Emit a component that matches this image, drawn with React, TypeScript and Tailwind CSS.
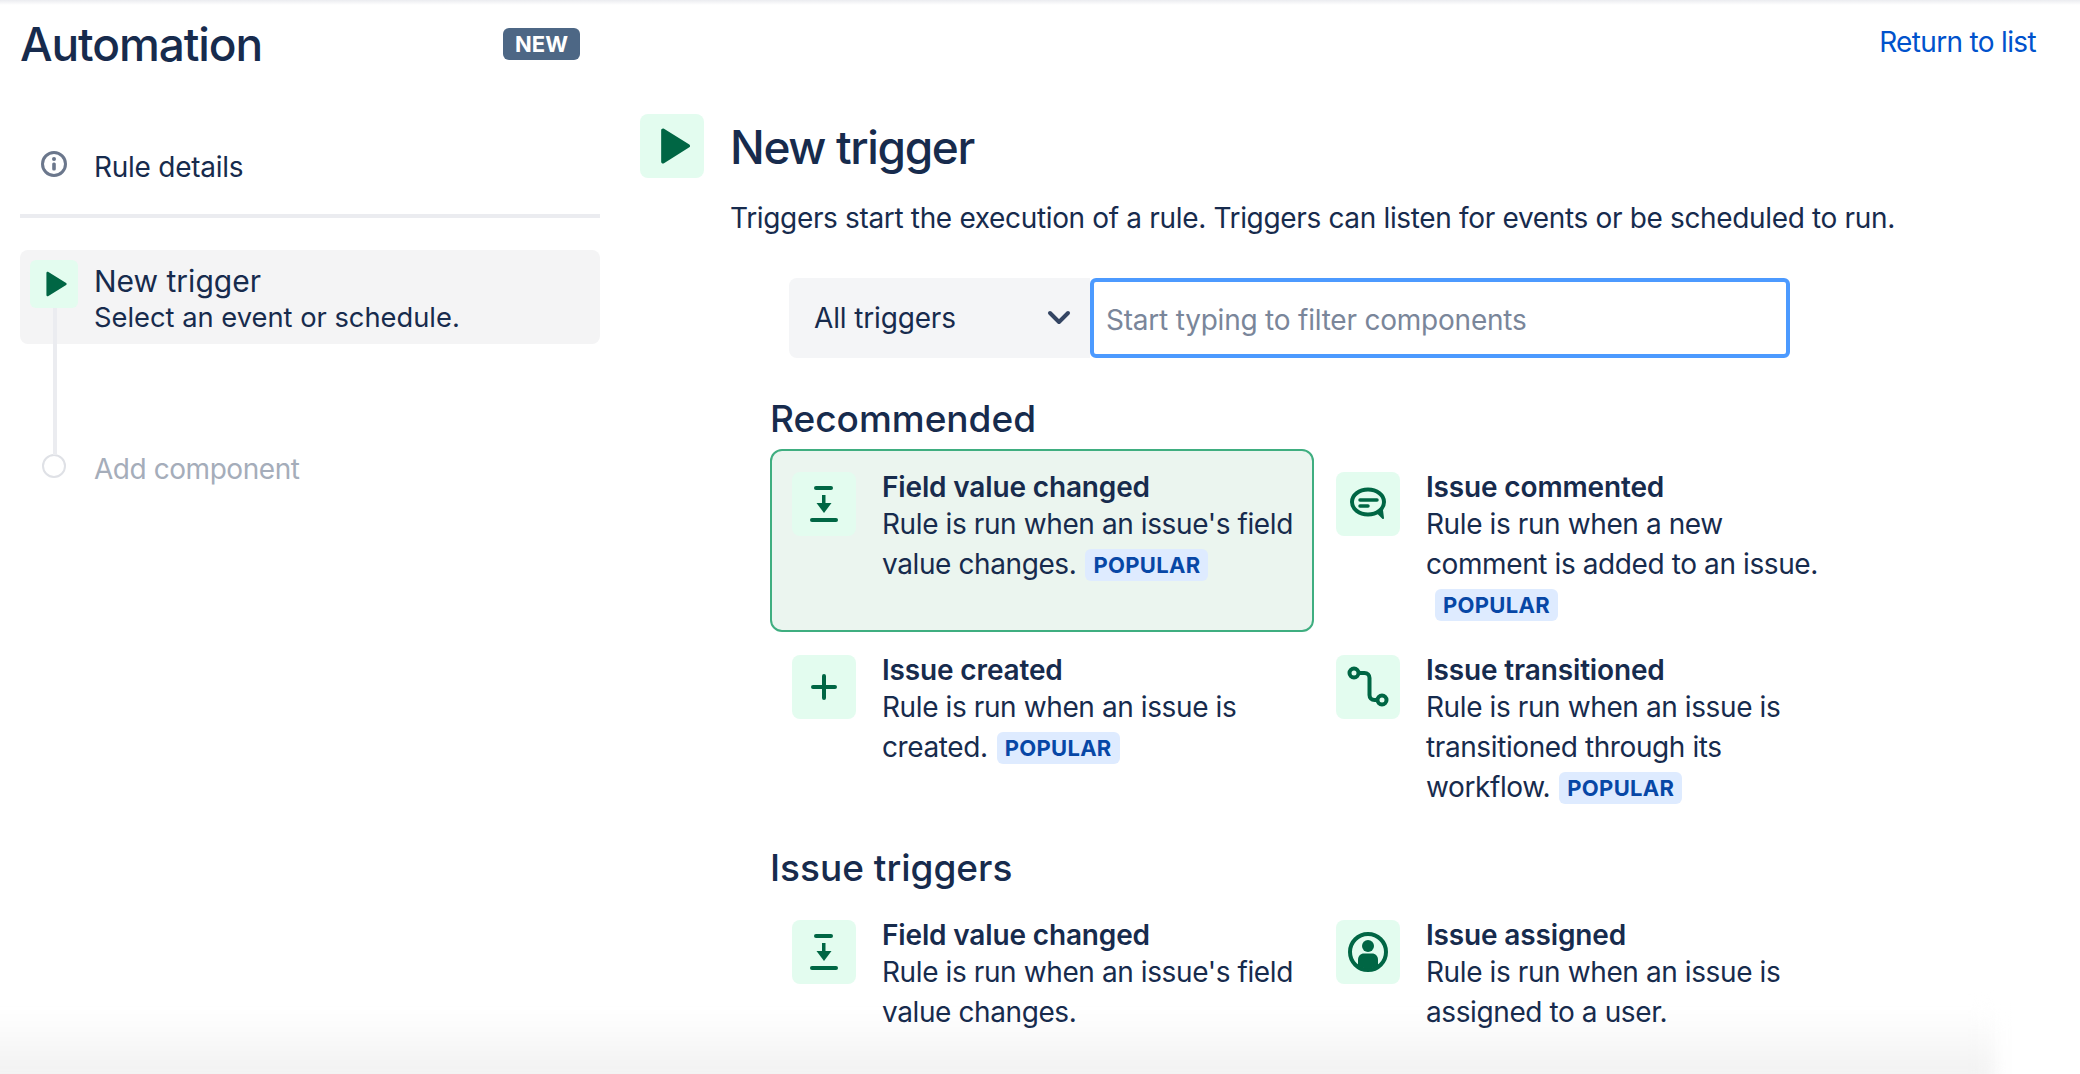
import React from "react";

type Trigger = {
  title: string;
  lines: string;
  icon: React.ReactNode;
  popular?: boolean;
  selected?: boolean;
};

const GREEN = "#006644";

function PlayIcon({ size }: { size: number }) {
  return (
    <svg width={size} height={size} viewBox="0 0 24 24" fill={GREEN}>
      <path d="M5.5 2.6c0-.9 1-1.4 1.700-.9l15.200 9.400c.6.4.6 1.300 0 1.700L7.200 22.300c-.7.5-1.700 0-1.700-.9V2.600z" />
    </svg>
  );
}

function FieldIcon() {
  return (
    <svg width="32" height="40" viewBox="0 0 32 40" fill={GREEN}>
      <rect x="6" y="2" width="19" height="4" rx="2" />
      <rect x="14" y="11" width="3.500" height="14" />
      <path d="M8.500 19h15L16 29z" />
      <rect x="2" y="34" width="28" height="4" rx="2" />
    </svg>
  );
}

function CommentIcon() {
  return (
    <svg width="38" height="34" viewBox="0 0 38 34" fill="none" stroke={GREEN}>
      <ellipse cx="19" cy="15" rx="16" ry="12.500" strokeWidth="4" />
      <path d="M28 25l6 6-1-8z" fill={GREEN} strokeWidth="2" strokeLinejoin="round" />
      <path d="M11 13h17" strokeWidth="3.500" strokeLinecap="round" />
      <path d="M11 19h8" strokeWidth="3.500" strokeLinecap="round" />
    </svg>
  );
}

function PlusIcon() {
  return (
    <svg width="26" height="26" viewBox="0 0 26 26" fill="none" stroke={GREEN} strokeWidth="4" strokeLinecap="round">
      <path d="M13 2v22M2 13h22" />
    </svg>
  );
}

function TransitionIcon() {
  return (
    <svg width="42" height="42" viewBox="0 0 42 42" fill="none" stroke={GREEN} strokeWidth="4">
      <circle cx="7" cy="7" r="4.500" />
      <circle cx="35" cy="34" r="4.500" />
      <path d="M11.500 7h6c3 0 5 2 5 5v17c0 3 2 5 5 5h3" />
    </svg>
  );
}

function PersonIcon() {
  return (
    <svg width="40" height="40" viewBox="0 0 40 40" fill={GREEN}>
      <circle cx="20" cy="20" r="18" fill="none" stroke={GREEN} strokeWidth="4" />
      <circle cx="20" cy="14" r="6" />
      <path d="M10 28c0-4 2.500-6.500 6-6.500h8c3.500 0 6 2.500 6 6.500v5.500c-2.800 2-6.200 3-10 3s-7.200-1-10-3z" />
    </svg>
  );
}

function InfoIcon() {
  return (
    <svg width="26" height="26" viewBox="0 0 26 26" fill="none">
      <circle cx="13" cy="13" r="11.500" stroke="#6B778C" strokeWidth="3" />
      <circle cx="13" cy="8" r="2" fill="#6B778C" />
      <rect x="11.200" y="11.500" width="3.600" height="8" rx="1.500" fill="#6B778C" />
    </svg>
  );
}

const recommended: Trigger[] = [
  {
    title: "Field value changed",
    lines: "Rule is run when an issue's field value changes.",
    icon: <FieldIcon />,
    popular: true,
    selected: true,
  },
  {
    title: "Issue commented",
    lines: "Rule is run when a new comment is added to an issue.",
    icon: <CommentIcon />,
    popular: true,
  },
  {
    title: "Issue created",
    lines: "Rule is run when an issue is created.",
    icon: <PlusIcon />,
    popular: true,
  },
  {
    title: "Issue transitioned",
    lines: "Rule is run when an issue is transitioned through its workflow.",
    icon: <TransitionIcon />,
    popular: true,
  },
];

const issueTriggers: Trigger[] = [
  {
    title: "Field value changed",
    lines: "Rule is run when an issue's field value changes.",
    icon: <FieldIcon />,
  },
  {
    title: "Issue assigned",
    lines: "Rule is run when an issue is assigned to a user.",
    icon: <PersonIcon />,
  },
];

function TriggerCard({ trigger }: { trigger: Trigger }) {
  return (
    <div
      className={`flex gap-[26px] rounded-xl border-2 pb-[6px] pl-5 pr-[12px] pt-[21px] ${
        trigger.selected ? "border-[#3fae80] bg-[#ebf5ef]" : "border-transparent"
      }`}
    >
      <div className="flex h-16 w-16 shrink-0 items-center justify-center rounded-lg bg-[#e3fcef]">
        {trigger.icon}
      </div>
      <div className="min-w-0 text-[28px] leading-[40px] tracking-[-0.4px] text-[#172b4d]">
        <div className="h-[32px] font-semibold leading-[30px] tracking-[-0.15px]">{trigger.title}</div>
        <div>
          {trigger.lines}
          {trigger.popular ? (
            <span className="ml-[9px] inline-block rounded-md bg-[#deebff] px-2 align-[1px] text-[22px] font-bold leading-[32px] tracking-[0.3px] text-[#0747a6]">
              POPULAR
            </span>
          ) : null}
        </div>
      </div>
    </div>
  );
}

export default function App() {
  return (
    <div className="relative h-screen overflow-hidden bg-white font-['Inter',sans-serif] text-[#172b4d]">
      <div className="absolute inset-x-0 top-0 h-[5px] bg-gradient-to-b from-[#ebecf0] to-white" />
      <div className="absolute bottom-[-12px] left-[-30px] h-[76px] w-[2025px] bg-gradient-to-b from-white to-[#efefef] blur-[10px]" />

      <div className="relative flex">
        <aside className="ml-5 w-[580px] shrink-0">
          <div className="flex h-[88px] items-center justify-between pr-5">
            <h1 className="text-[46px] font-medium leading-[52px] tracking-[-1.1px]">Automation</h1>
            <span className="rounded-md bg-[#4d6785] px-3 text-[22px] font-bold leading-[32px] text-white">
              NEW
            </span>
          </div>

          <div className="flex h-[130px] items-center gap-[27px] border-b-4 border-[#ebecf0] pb-[4px] pl-[21px] pt-[30px]">
            <InfoIcon />
            <span className="pt-[5px] text-[28px] tracking-[-0.25px]">Rule details</span>
          </div>

          <div className="relative mt-8 h-[94px] rounded-lg bg-[#f4f4f5] pl-[74px] pt-[10px]">
            <div className="absolute left-[10px] top-[10px] flex h-12 w-12 items-center justify-center rounded-md bg-[#e3fcef]">
              <PlayIcon size={28} />
            </div>
            <div className="pt-px text-[30px] leading-[40px]">New trigger</div>
            <div className="text-[27.300px] leading-[34px]">Select an event or schedule.</div>
            <div className="absolute left-[33px] top-[58px] h-[147px] w-1 bg-[#ebecf0]" />
          </div>

          <div className="mt-[100px] flex items-start gap-[28px] pl-[22px]">
            <div className="mt-[10px] h-6 w-6 rounded-full border-2 border-[#dfe1e6] bg-white" />
            <span className="mt-[3px] text-[28px] leading-[44px] tracking-[-0.45px] text-[#a5adba]">Add component</span>
          </div>
        </aside>

        <main className="ml-10 min-w-0 flex-1">
          <div className="mt-[114px] flex items-center gap-[26px]">
            <div className="flex h-16 w-16 items-center justify-center rounded-lg bg-[#e3fcef]">
              <PlayIcon size={40} />
            </div>
            <h2 className="pt-[2px] text-[46px] font-medium leading-[52px] tracking-[-1.360px]">New trigger</h2>
          </div>
          <p className="ml-[90px] mt-[20px] text-[28px] leading-[40px] tracking-[-0.34px]">
            Triggers start the execution of a rule. Triggers can listen for events or be scheduled to run.
          </p>

          <div className="ml-[149px] mt-[40px] flex h-20">
            <div className="flex w-[301px] items-center justify-between rounded-l-lg bg-[#f4f5f7] pl-[25px] pr-[19px]">
              <span className="text-[28px] tracking-[-0.15px]">All triggers</span>
              <svg width="24" height="16" viewBox="0 0 24 16" fill="none" stroke="#344563" strokeWidth="4" strokeLinecap="round" strokeLinejoin="round">
                <path d="M3 3l9 9 9-9" />
              </svg>
            </div>
            <input
              readOnly
              placeholder="Start typing to filter components"
              className="w-[700px] rounded-md border-4 border-[#4c9aff] bg-white px-[12px] pt-[3px] text-[28px] tracking-[-0.22px] outline-none placeholder:text-[#7a869a]"
            />
          </div>

          <div className="ml-[130px]">
            <h3 className="mt-[39px] text-[37px] font-medium leading-[44px]">Recommended</h3>
            <div className="mt-2 grid w-[1088px] grid-cols-2">
              {recommended.map((trigger, index) => (
                <TriggerCard key={index} trigger={trigger} />
              ))}
            </div>
            <h3 className="mt-[31px] text-[37px] font-medium leading-[44px]">Issue triggers</h3>
            <div className="mt-[7px] grid w-[1088px] grid-cols-2">
              {issueTriggers.map((trigger, index) => (
                <TriggerCard key={index} trigger={trigger} />
              ))}
            </div>
          </div>
        </main>

        <a className="absolute right-[44px] top-[24px] text-[28px] leading-[36px] tracking-[-0.66px] text-[#0052cc]">Return to list</a>
      </div>
    </div>
  );
}
